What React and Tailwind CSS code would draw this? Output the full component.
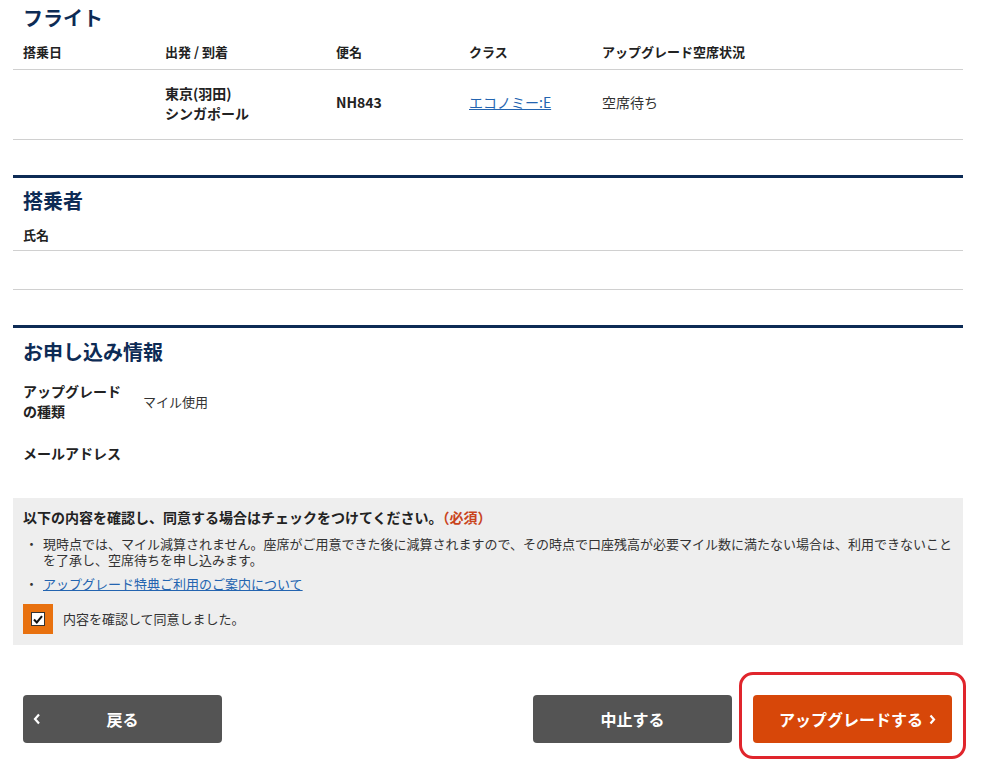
import React, { useState } from "react";

const font = { fontFamily: '"Noto Sans CJK JP", "Noto Sans", sans-serif' };

const flights = [
  { date: "", from: "東京(羽田)", to: "シンガポール", flight: "NH843", cls: "エコノミー:E", status: "空席待ち" },
];

const App = () => {
  const [agreed, setAgreed] = useState(true);

  return (
    <main className="min-h-screen bg-white text-[#333]" style={font}>
      <div className="w-[950px] ml-[13px]">
        {/* フライト */}
        <section>
          <h2 className="pl-[10px] pt-[4px] h-[36px] text-[20px] leading-[28px] font-bold text-[#0d2b55]">フライト</h2>
          <div className="grid grid-cols-[142px_171px_133px_133px_1fr] pl-[10px] h-[34px] items-center border-b border-[#d0d0d0] text-[13px] font-bold text-[#222] pb-[1px]">
            <div>搭乗日</div>
            <div>出発 / 到着</div>
            <div>便名</div>
            <div>クラス</div>
            <div>アップグレード空席状況</div>
          </div>
          {flights.map((f) => (
            <div
              key={f.flight}
              className="grid grid-cols-[142px_171px_133px_133px_1fr] pl-[10px] h-[70px] pb-[4px] items-center border-b border-[#d0d0d0] text-[14px]"
            >
              <div>{f.date}</div>
              <div className="font-bold leading-[20px] text-[#222]">
                <span className="block">{f.from}</span>
                <span className="block">{f.to}</span>
              </div>
              <div className="font-bold text-[#222]">{f.flight}</div>
              <div>
                <a href="#" className="text-[#2364b0] underline">{f.cls}</a>
              </div>
              <div>{f.status}</div>
            </div>
          ))}
        </section>

        {/* 搭乗者 */}
        <section className="mt-[35px] border-t-[3px] border-[#0d2b55]">
          <h2 className="pl-[10px] pt-[9px] h-[42px] text-[20px] leading-[28px] font-bold text-[#0d2b55]">搭乗者</h2>
          <div className="pl-[10px] h-[31px] flex items-center border-b border-[#d0d0d0] text-[13px] font-bold text-[#222]">氏名</div>
          <div className="h-[39px] border-b border-[#d0d0d0]" />
        </section>

        {/* お申し込み情報 */}
        <section className="mt-[35px] border-t-[3px] border-[#0d2b55]">
          <h2 className="pl-[10px] pt-[10px] h-[52px] text-[20px] leading-[28px] font-bold text-[#0d2b55]">お申し込み情報</h2>
          <dl className="pl-[10px] text-[14px]">
            <div className="flex items-center h-[40px]">
              <dt className="w-[120px] font-bold text-[#222] leading-[20px] pt-[2px]">
                <span className="block">アップグレード</span>
                <span className="block">の種類</span>
              </dt>
              <dd className="text-[13px] pt-[3px]">マイル使用</dd>
            </div>
            <div className="flex items-center h-[30px] mt-[18px]">
              <dt className="w-[120px] font-bold text-[#222]">メールアドレス</dt>
              <dd></dd>
            </div>
          </dl>
        </section>

        {/* 同意 */}
        <section className="mt-[30px] bg-[#eeeeee] pl-[10px] pr-[3px] pt-[9px] pb-[11px]">
          <p className="text-[14px] font-bold text-[#222] leading-[20px]">
            以下の内容を確認し、同意する場合はチェックをつけてください。
            <span className="text-[#c9441c]">（必須）</span>
          </p>
          <ul className="mt-[9px] text-[13px] leading-[16px] space-y-[8px]">
            <li className="flex">
              <span className="w-[20px] shrink-0 pl-[2px]">・</span>
              <span>
                現時点では、マイル減算されません。座席がご用意できた後に減算されますので、その時点で口座残高が必要マイル数に満たない場合は、利用できないことを了承し、空席待ちを申し込みます。
              </span>
            </li>
            <li className="flex">
              <span className="w-[20px] shrink-0 pl-[2px]">・</span>
              <a href="#" className="text-[#2364b0] underline">アップグレード特典ご利用のご案内について</a>
            </li>
          </ul>
          <label className="mt-[12px] flex items-center gap-[10px] text-[13px] cursor-pointer">
            <span className="w-[30px] h-[30px] bg-[#e8710f] flex items-center justify-center">
              <input
                type="checkbox"
                checked={agreed}
                onChange={(e) => setAgreed(e.target.checked)}
                className="sr-only"
              />
              <span className="w-[14px] h-[14px] bg-white border border-[#333] flex items-center justify-center">
                {agreed && (
                  <svg width="10" height="9" viewBox="0 0 10 9">
                    <path d="M1 4.5 L3.8 7.5 L9 1.2" stroke="#111" strokeWidth="2" fill="none" />
                  </svg>
                )}
              </span>
            </span>
            <span>内容を確認して同意しました。</span>
          </label>
        </section>

        {/* ボタン */}
        <div className="mt-[27px] pl-[10px] flex items-start">
          <button className="mt-[23px] relative w-[199px] h-[48px] rounded-[4px] bg-[#545454] text-white text-[16px] font-bold flex items-center justify-center">
            <svg className="absolute left-[10px] top-1/2 -translate-y-1/2" width="8" height="12" viewBox="0 0 8 12">
              <path d="M6 1.5 L2 6 L6 10.5" stroke="white" strokeWidth="2.2" fill="none" />
            </svg>
            戻る
          </button>
          <div className="ml-auto flex items-start mr-[-3px]">
            <button className="mt-[23px] w-[199px] h-[48px] rounded-[4px] bg-[#545454] text-white text-[16px] font-bold">中止する</button>
            <div className="ml-[7px] pt-[20px] pb-[13px] px-[11px] border-[3px] border-[#e0252c] rounded-[14px]">
              <button className="w-[199px] h-[48px] rounded-[4px] bg-[#d74709] text-white text-[16px] font-bold flex items-center justify-center gap-[6px] pl-[10px]">
                アップグレードする
                <svg width="7" height="11" viewBox="0 0 7 11">
                  <path d="M1.5 1.5 L5 5.5 L1.5 9.5" stroke="white" strokeWidth="2.2" fill="none" />
                </svg>
              </button>
            </div>
          </div>
        </div>
      </div>
    </main>
  );
};

export default App;
